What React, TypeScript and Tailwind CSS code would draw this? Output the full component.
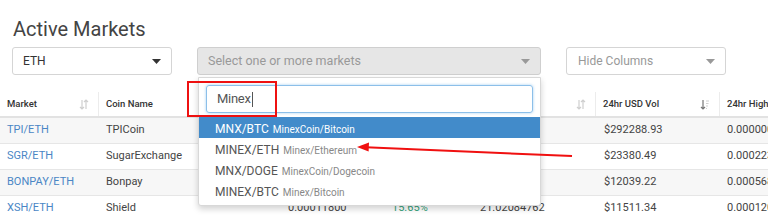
import React from 'react';

const rows = [
  { market: 'TPI/ETH', coin: 'TPICoin', last: '0.00000058', change: '-3.12%', vol: '542.1102', usd: '$292288.93', high: '0.00000062' },
  { market: 'SGR/ETH', coin: 'SugarExchange', last: '0.00021900', change: '2.04%', vol: '43.8120', usd: '$23380.49', high: '0.00022330' },
  { market: 'BONPAY/ETH', coin: 'Bonpay', last: '0.00055000', change: '1.10%', vol: '22.5600', usd: '$12039.22', high: '0.00056860' },
  { market: 'XSH/ETH', coin: 'Shield', last: '0.00011800', change: '15.65%', vol: '21.02084762', usd: '$11511.34', high: '0.00012090' },
];

const items = [
  { pair: 'MNX/BTC', name: 'MinexCoin/Bitcoin' },
  { pair: 'MINEX/ETH', name: 'Minex/Ethereum' },
  { pair: 'MNX/DOGE', name: 'MinexCoin/Dogecoin' },
  { pair: 'MINEX/BTC', name: 'Minex/Bitcoin' },
];

const cols = 'grid grid-cols-[99px_181px_104px_88px_124px_124px_1fr]';

function Caret({ dark }: { dark?: boolean }) {
  return (
    <svg width="9" height="5" viewBox="0 0 9 5">
      <path d="M0 0h9L4.5 5z" fill={dark ? '#333' : '#999'} />
    </svg>
  );
}

function SortBoth() {
  return (
    <svg width="10" height="11" viewBox="0 0 10 11" fill="none" stroke="#cfcfcf" strokeWidth="1.2">
      <path d="M3 1v9M1 8l2 2 2-2" />
      <path d="M7 10V1M5 3l2-2 2 2" />
    </svg>
  );
}

function SortDown() {
  return (
    <svg width="10" height="11" viewBox="0 0 10 11" fill="none" strokeWidth="1.2">
      <path d="M3 1v9M1 8l2 2 2-2" stroke="#777" />
      <path d="M6 2h3M6 4.5h2.5M6 7h2M6 9.5h1" stroke="#cfcfcf" />
    </svg>
  );
}

function HeadCell({ label, sort }: { label: string; sort?: 'both' | 'down' }) {
  return (
    <div className="flex items-center justify-between pl-[7px] pr-[9px] border-r border-[#ececec] h-full">
      <span className="whitespace-nowrap">{label}</span>
      {sort === 'both' && <SortBoth />}
      {sort === 'down' && <SortDown />}
    </div>
  );
}

export default function App() {
  return (
    <div className="relative w-[768px] h-[220px] overflow-hidden bg-white font-['Roboto',sans-serif]">
      <div className="pl-[13px] pt-[16px]">
        <h1 className="text-[20px] leading-[26px] text-[#444] font-normal">Active Markets</h1>
      </div>

      <div className="flex items-center mt-[5px] pl-[12px] gap-[25px]">
        <div className="w-[160px] h-[28px] border border-[#d5d5d5] rounded-[3px] flex items-center justify-between pl-[10px] pr-[10px] text-[12px] text-[#333]">
          <span>ETH</span>
          <Caret dark />
        </div>
        <div className="w-[344px] h-[28px] border border-[#cfcfcf] rounded-[3px] bg-[#e6e6e6] flex items-center justify-between pl-[10px] pr-[10px] text-[12.5px] text-[#999]">
          <span>Select one or more markets</span>
          <Caret />
        </div>
        <div className="w-[160px] h-[28px] border border-[#d5d5d5] rounded-[3px] flex items-center justify-between pl-[11px] pr-[10px] text-[12px] text-[#999]">
          <span>Hide Columns</span>
          <Caret />
        </div>
      </div>

      <div className="mt-[17px] text-[11px]">
        <div className={`${cols} h-[26px] items-center text-[9.5px] font-medium text-[#333] border-b-2 border-[#e2e2e2]`}>
          <HeadCell label="Market" sort="both" />
          <HeadCell label="Coin Name" />
          <HeadCell label="Last Price" sort="both" />
          <HeadCell label="24hr Change" sort="both" />
          <HeadCell label="24hr Volume" sort="both" />
          <HeadCell label="24hr USD Vol" sort="down" />
          <div className="pl-[7px] whitespace-nowrap">24hr High</div>
        </div>
        {rows.map((r, i) => (
          <div
            key={r.market}
            className={`${cols} h-[26px] items-center text-[#444] border-b border-[#e6e6e6] whitespace-nowrap ${i % 2 === 0 ? 'bg-[#f7f7f7]' : 'bg-white'}`}
          >
            <div className="pl-[7px] text-[#4a86c5]">{r.market}</div>
            <div className="pl-[7px]">{r.coin}</div>
            <div className="pl-[8px]">{r.last}</div>
            <div className="pl-[8px] text-[#35a27a]">{r.change}</div>
            <div className="pl-[8px]">{r.vol}</div>
            <div className="pl-[8px]">{r.usd}</div>
            <div className="pl-[7px] overflow-hidden">{r.high}</div>
          </div>
        ))}
      </div>

      {/* open markets dropdown */}
      <div className="absolute left-[198px] top-[77px] w-[343px] h-[129px] bg-white border border-[#d8d8d8] rounded-b-[3px] shadow-[0_3px_6px_rgba(0,0,0,0.18)]">
        <div className="px-[7px] pt-[7px] pb-[4px]">
          <div className="h-[28px] border border-[#8cbfe9] rounded-[3px] shadow-[0_0_3px_rgba(102,175,233,0.6)] flex items-center pl-[10px] text-[13px] tracking-[-0.3px] text-[#555]">
            Minex<span className="w-px h-[15px] bg-[#555] ml-px" />
          </div>
        </div>
        {items.map((it, i) => (
          <div
            key={it.pair}
            className={`h-[21px] flex items-baseline gap-[4px] pl-[16px] pt-[3px] whitespace-nowrap ${i === 0 ? 'bg-[#428bca] text-white' : 'text-[#555]'}`}
          >
            <span className="text-[12px]">{it.pair}</span>
            <span className={`text-[10px] ${i === 0 ? 'text-white' : 'text-[#888]'}`}>{it.name}</span>
          </div>
        ))}
      </div>

      {/* annotation box */}
      <div className="absolute left-[187px] top-[81px] w-[90px] h-[36px] border-2 border-[#ee1111]" />

      {/* annotation arrow */}
      <svg className="absolute left-0 top-0" width="768" height="220" viewBox="0 0 768 220">
        <path d="M572 156L366 147.3" stroke="#f01010" strokeWidth="2" fill="none" />
        <path d="M357 147l12-4.5-0.4 9z" fill="#f01010" />
      </svg>
    </div>
  );
}
